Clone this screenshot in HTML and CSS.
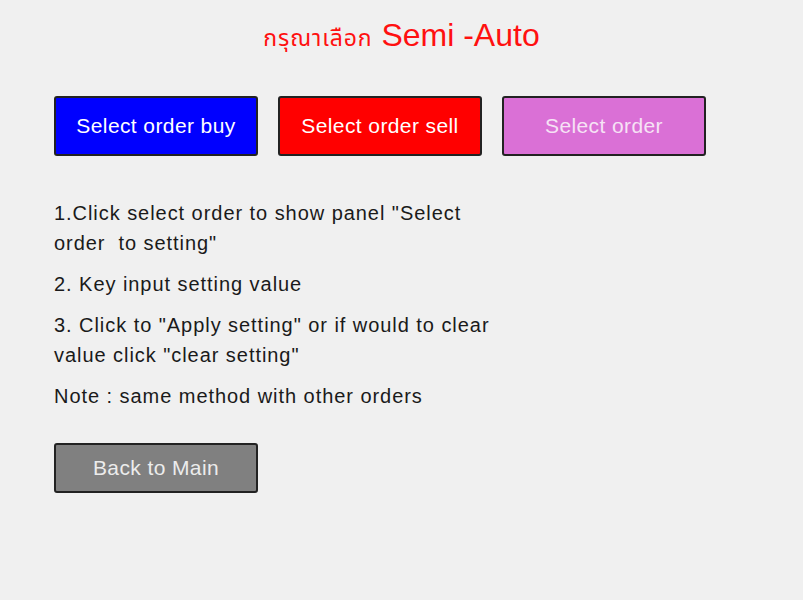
FILE: index.html
```html
<!DOCTYPE html>
<html lang="en">
<head>
    <meta charset="UTF-8">
    <meta name="viewport" content="width=device-width, initial-scale=1.0">
    <title>Semi-Auto</title>
    <link rel="stylesheet" href="styles.css">
</head>
<body>
    <div class="panel">
        <h1 class="title"><span class="thai">กรุณาเลือก</span> Semi -Auto</h1>

        <div class="order-buttons">
            <button class="btn btn-buy">Select order buy</button>
            <button class="btn btn-sell">Select order sell</button>
            <button class="btn btn-order">Select order</button>
        </div>

        <div class="steps">
            <p>1.Click select order to show panel "Select order&nbsp; to setting"</p>
            <p>2. Key input setting value</p>
            <p>3. Click to "Apply setting" or if would to clear value click "clear setting"</p>
            <p>Note : same method with other orders</p>
        </div>

        <button class="btn btn-back">Back to Main</button>
    </div>
</body>
</html>
```

FILE: styles.css
```css
* {
    margin: 0;
    padding: 0;
    box-sizing: border-box;
    font-family: 'Liberation Sans', Arial, sans-serif;
}

body {
    background: #f0f0f0;
    color: #1a1a1a;
}

.panel {
    padding: 16px 54px 0;
}

.title {
    text-align: center;
    font-weight: normal;
    font-size: 32px;
    line-height: 38px;
    color: #ff1010;
    height: 44px;
}

.title .thai {
    font-size: 23px;
    letter-spacing: 0.9px;
    font-family: 'Noto Sans Thai', 'Noto Sans', 'DejaVu Sans', sans-serif;
}

.order-buttons {
    display: flex;
    gap: 20px;
    margin-top: 36px;
}

.btn {
    width: 204px;
    height: 60px;
    border: 2px solid #222;
    border-radius: 3px;
    color: #fff;
    font-size: 21px;
    letter-spacing: 0.4px;
    cursor: pointer;
}

.btn-buy {
    background: #0000ff;
}

.btn-sell {
    background: #ff0000;
}

.btn-order {
    background: #da70d6;
    color: #f6e2f5;
}

.steps {
    margin-top: 42px;
    width: 450px;
    font-size: 20px;
    letter-spacing: 0.95px;
    line-height: 30px;
}

.steps p {
    margin-bottom: 11px;
}

.btn-back {
    margin-top: 21px;
    height: 50px;
    background: #808080;
    color: #ececec;
}
```
